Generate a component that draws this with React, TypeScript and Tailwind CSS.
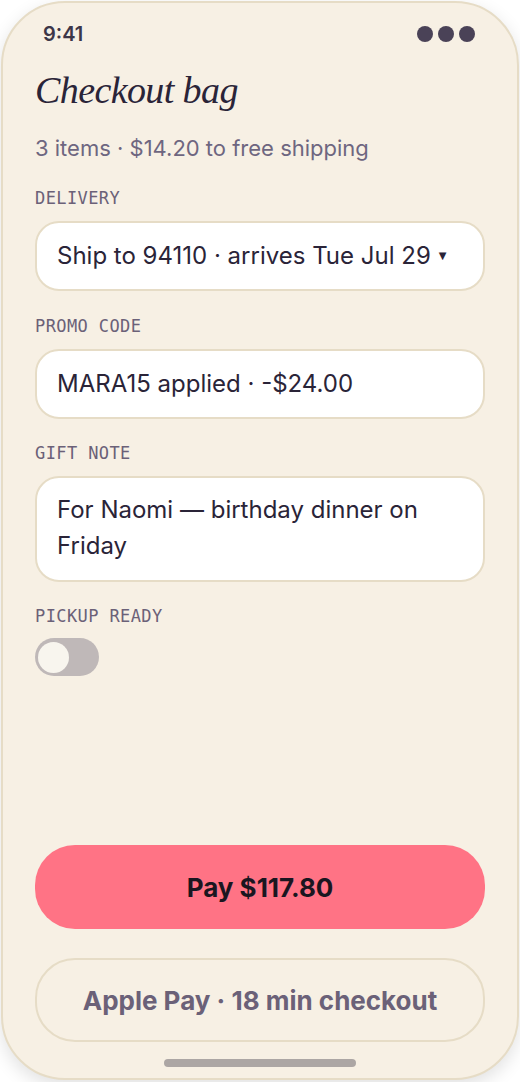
const sans = "font-['Inter','Noto_Sans',sans-serif]";
const mono = "font-['DejaVu_Sans_Mono','Liberation_Mono',monospace]";

function FieldLabel({ children }: { children: string }) {
  return (
    <div className={`${mono} h-[20px] text-[17px] leading-[20px] tracking-[0.4px] text-[#6b6178]`}>
      {children}
    </div>
  );
}

export default function App() {
  return (
    <div className="w-[520px] h-[1082px] bg-white p-[1px]">
      {/* phone frame */}
      <div className="relative flex flex-col h-[1079px] w-full rounded-[64px] border-2 border-[#e6dcc6] bg-[#f7f0e4] shadow-[0_6px_18px_rgba(0,0,0,0.12)] overflow-hidden">
        {/* status bar */}
        <div className={`${sans} mt-[19px] flex h-[24px] items-center justify-between pl-[40px] pr-[42px]`}>
          <span className="text-[20px] font-semibold leading-[24px] text-[#3d3648]">9:41</span>
          <div className="flex gap-[5px]">
            <span className="h-[16px] w-[16px] rounded-full bg-[#4a4257]" />
            <span className="h-[16px] w-[16px] rounded-full bg-[#4a4257]" />
            <span className="h-[16px] w-[16px] rounded-full bg-[#4a4257]" />
          </div>
        </div>

        <div className="flex flex-1 flex-col px-[32px]">
          <h1 className="mt-[19px] font-['Liberation_Serif','DejaVu_Serif',serif] text-[38px] italic leading-[50px] tracking-[-0.6px] text-[#2a2438]">
            Checkout bag
          </h1>
          <p className={`${sans} mt-[18px] text-[22px] leading-[30px] text-[#6e6680]`}>
            3 items · $14.20 to free shipping
          </p>

          {/* delivery */}
          <div className="mt-[25px] flex flex-col gap-[13px]">
            <FieldLabel>DELIVERY</FieldLabel>
            <div className={`${sans} flex h-[70px] shrink-0 items-center rounded-[24px] border-2 border-[#e6dcc6] bg-white px-[20px] text-[24px] text-[#2a2438]`}>
              Ship to 94110 · arrives Tue Jul 29
              <span className="ml-[8px] font-['DejaVu_Sans',sans-serif] text-[10px] leading-none">▼</span>
            </div>
          </div>

          {/* promo */}
          <div className="mt-[25px] flex flex-col gap-[13px]">
            <FieldLabel>PROMO CODE</FieldLabel>
            <div className={`${sans} flex h-[70px] shrink-0 items-center rounded-[24px] border-2 border-[#e6dcc6] bg-white px-[20px] text-[24px] text-[#2a2438]`}>
              MARA15 applied · -$24.00
            </div>
          </div>

          {/* gift note */}
          <div className="mt-[24px] flex flex-col gap-[13px]">
            <FieldLabel>GIFT NOTE</FieldLabel>
            <div className={`${sans} rounded-[24px] border-2 border-[#e6dcc6] bg-white px-[20px] pt-[14px] pb-[16px] text-[24px] leading-[36px] text-[#2a2438]`}>
              For Naomi — birthday dinner on Friday
            </div>
          </div>

          {/* pickup toggle */}
          <div className="mt-[24px] flex flex-col gap-[12px]">
            <FieldLabel>PICKUP READY</FieldLabel>
            <div className="flex h-[38px] w-[64px] items-center rounded-full bg-[#bfb8b8] px-[3px]">
              <span className="h-[31px] w-[31px] rounded-full bg-[#f8f5ee]" />
            </div>
          </div>

          {/* actions */}
          <div className={`${sans} mt-auto flex flex-col gap-[29px]`}>
            <button className="h-[84px] w-full rounded-[40px] bg-[#ff7385] text-[26px] font-bold text-[#1a1620]">
              Pay $117.80
            </button>
            <button className="h-[84px] w-full rounded-[40px] border-2 border-[#e6dcc6] text-[26px] font-bold text-[#6b6178]">
              Apple Pay · 18 min checkout
            </button>
          </div>

          <div className="mt-[17px] mb-[11px] flex justify-center">
            <span className="h-[8px] w-[192px] rounded-full bg-[#aca6a4]" />
          </div>
        </div>
      </div>
    </div>
  );
}
